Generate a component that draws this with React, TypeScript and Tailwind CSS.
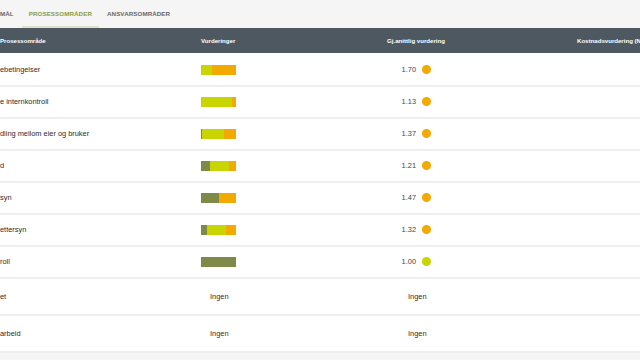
import React from "react";

type Seg = { c: string; w: number };

interface Row {
  name: string;
  bar?: Seg[];
  avg?: string;
  dot?: string;
}

const OLIVE = "#7f8a48";
const LIME = "#c8d500";
const ORANGE = "#f2a900";

const rows: Row[] = [
  { name: "ebetingelser", bar: [{ c: LIME, w: 11 }, { c: ORANGE, w: 24 }], avg: "1.70", dot: ORANGE },
  { name: "e internkontroll", bar: [{ c: LIME, w: 31 }, { c: ORANGE, w: 4 }], avg: "1.13", dot: ORANGE },
  {
    name: "dling mellom eier og bruker",
    bar: [{ c: OLIVE, w: 1 }, { c: LIME, w: 22 }, { c: ORANGE, w: 12 }],
    avg: "1.37",
    dot: ORANGE,
  },
  {
    name: "d",
    bar: [{ c: OLIVE, w: 9 }, { c: LIME, w: 19 }, { c: ORANGE, w: 7 }],
    avg: "1.21",
    dot: ORANGE,
  },
  { name: "syn", bar: [{ c: OLIVE, w: 18 }, { c: ORANGE, w: 17 }], avg: "1.47", dot: ORANGE },
  {
    name: "ettersyn",
    bar: [{ c: OLIVE, w: 6 }, { c: LIME, w: 19 }, { c: ORANGE, w: 10 }],
    avg: "1.32",
    dot: ORANGE,
  },
  { name: "roll", bar: [{ c: OLIVE, w: 35 }], avg: "1.00", dot: LIME },
  { name: "et" },
  { name: "arbeid" },
];

function Bar({ segs }: { segs: Seg[] }) {
  return (
    <div className="flex h-[10px] w-[35px]">
      {segs.map((s, i) => (
        <div key={i} className="h-full" style={{ width: s.w, background: s.c }} />
      ))}
    </div>
  );
}

export default function App() {
  return (
    <div
      className="w-[640px] h-[360px] overflow-hidden bg-[#f5f5f5] text-[#2b2b2b]"
      style={{ fontFamily: '"Liberation Sans", Arial, sans-serif' }}
    >
      {/* tabs */}
      <div className="flex h-[28px] items-stretch text-[6.2px] font-bold tracking-[0.1px]">
        <div className="flex items-center pr-[7px] text-[#666]">MÅL</div>
        <div className="ml-[1px] flex items-center border-b-2 border-[#dde1cc] px-[7px] pt-[2px] text-[#8c9a3c]">
          PROSESSOMRÅDER
        </div>
        <div className="ml-[1px] flex items-center px-[7px] text-[#666]">ANSVARSOMRÅDER</div>
      </div>

      {/* table header */}
      <div className="grid h-[25px] grid-cols-[201px_186px_190px_1fr] items-center whitespace-nowrap bg-[#4e5860] text-[6.1px] font-bold text-white">
        <div>Prosessområde</div>
        <div>Vurderinger</div>
        <div>Gj.anittlig vurdering</div>
        <div className="overflow-hidden">Kostnadsvurdering (NOK)</div>
      </div>

      {/* rows */}
      <div className="bg-white pt-[2px]">
        {rows.map((r, i) => (
          <div
            key={i}
            className={`grid grid-cols-[201px_186px_190px_1fr] items-center border-b-2 border-[#efefef] text-[7.4px] ${
              r.bar ? "h-[32px]" : "h-[37px]"
            }`}
          >
            <div className="whitespace-nowrap">{r.name}</div>
            <div>{r.bar ? <Bar segs={r.bar} /> : <span className="pl-[9px]">Ingen</span>}</div>
            <div>
              {r.avg ? (
                <div className="flex items-center">
                  <span className="w-[29px] text-right text-[#444]">{r.avg}</span>
                  <span className="ml-[6px] h-[9px] w-[9px] rounded-full" style={{ background: r.dot }} />
                </div>
              ) : (
                <span className="pl-[21px]">Ingen</span>
              )}
            </div>
            <div />
          </div>
        ))}
      </div>
    </div>
  );
}
